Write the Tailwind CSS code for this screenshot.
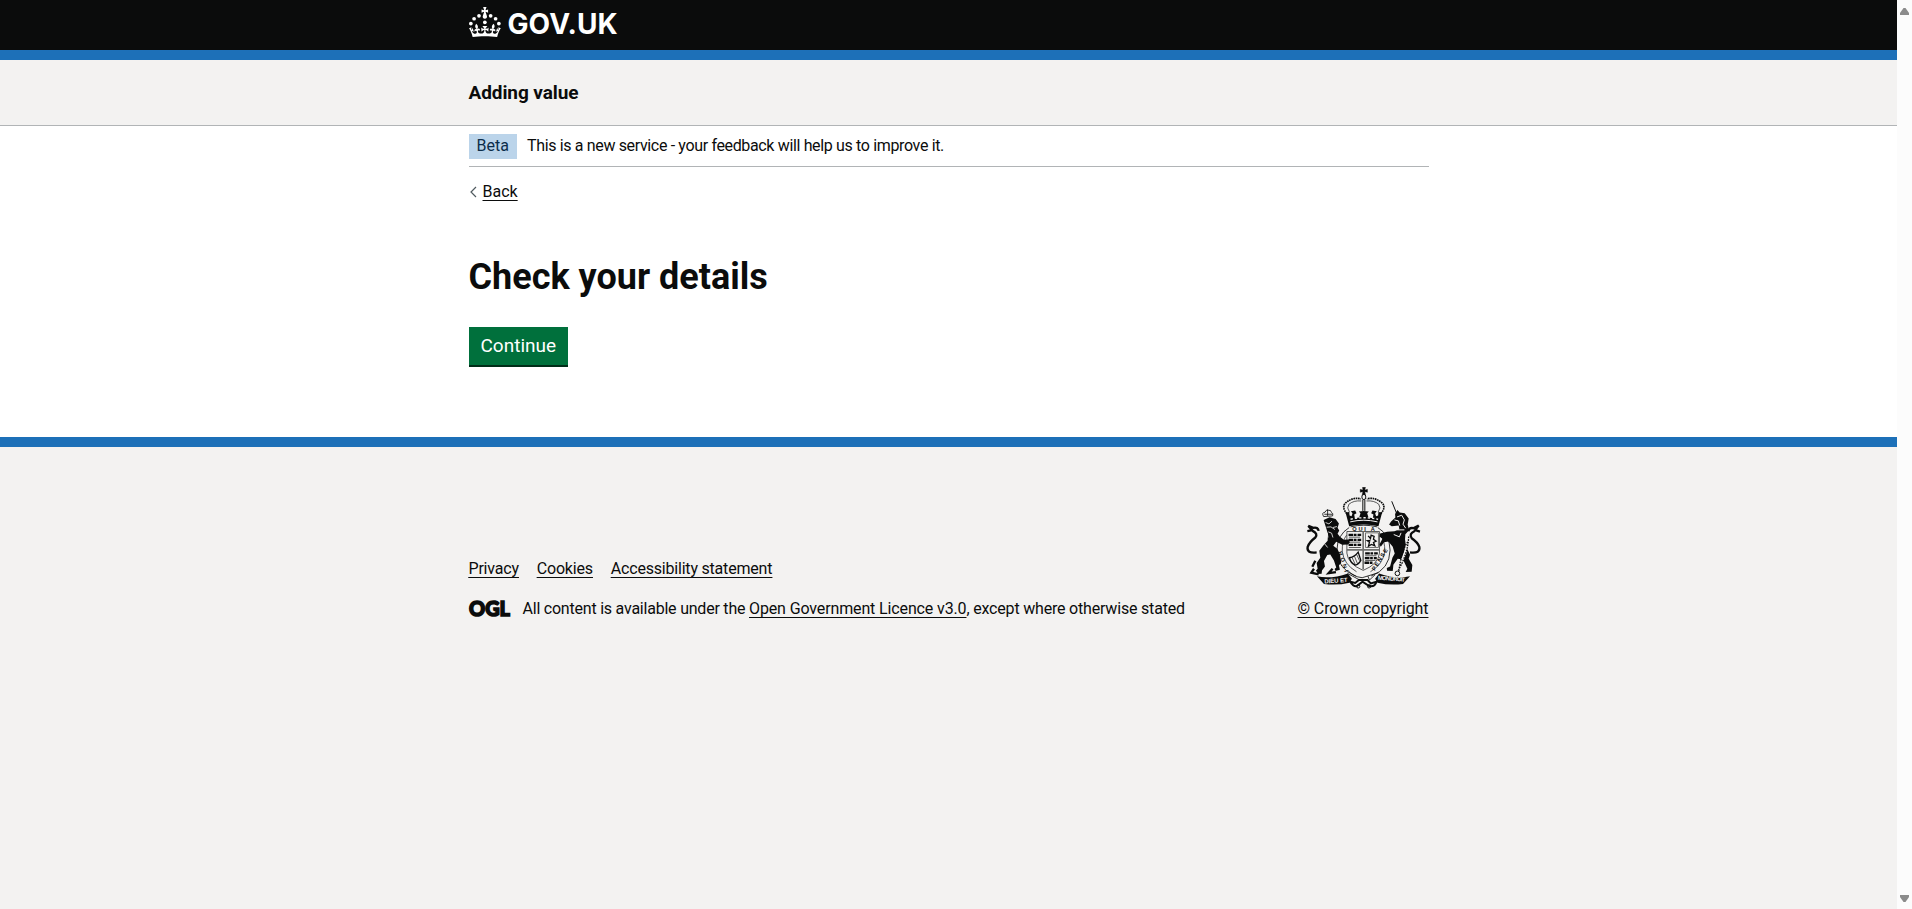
<!DOCTYPE html>
<html lang="en">
<head>
<meta charset="utf-8">
<title>Check your details - Adding value - GOV.UK</title>
<script src="https://cdn.jsdelivr.net/npm/@tailwindcss/browser@4"></script>
</head>
<body class="flex h-screen overflow-hidden bg-white font-['Roboto',sans-serif] text-[16px] leading-[20px] text-[#0b0c0c]">
<div class="flex min-w-0 flex-1 flex-col">
  <header>
    <div class="h-[60px] border-b-[10px] border-[#1d70b8] bg-[#0b0c0c]">
      <div class="mx-auto flex w-[960px] pt-[7px] text-white">
        <svg class="h-[30px] w-[32px] shrink-0" viewBox="0 0 64 60" fill="currentColor" aria-hidden="true">
          <circle cx="20" cy="17.6" r="3.7"/><circle cx="10.2" cy="23.5" r="3.7"/><circle cx="3.7" cy="33.2" r="3.7"/><circle cx="31.7" cy="30.6" r="3.7"/><circle cx="43.3" cy="17.6" r="3.7"/><circle cx="53.2" cy="23.5" r="3.7"/><circle cx="59.7" cy="33.2" r="3.7"/>
          <path d="M33.1,9.8c.2-.1.3-.3.5-.5l4.6,2.4v-6.8l-4.6,1.5c-.1-.2-.3-.3-.5-.5l1.9-5.9h-6.7l1.9,5.9c-.2.1-.3.3-.5.5l-4.6-1.5v6.8l4.6-2.4c.1.2.3.3.5.5l-2.6,8c-.9,2.8,1.2,5.7,4.1,5.7h0c3,0,5.1-2.9,4.1-5.7l-2.6-8ZM37,37.9s-3.4,3.8-4.1,6.1c2.2,0,4.2-.5,6.4-2.8l-.7,8.5c-2-2.8-4.4-4.1-5.7-3.8.1,3.1.5,6.7,5.8,7.2,3.7.3,6.7-1.5,7-3.8.4-2.6-2-4.3-3.7-1.6-1.4-4.5,2.4-6.1,4.9-3.2-1.9-4.5-1.8-7.7,2.4-10.9,3,4,2.6,7.3-1.2,11.1,2.4-1.3,6.2,0,4,4.6-1.2-2.8-3.7-2.2-4.2.2-.3,1.7.7,3.7,3,4.2,1.9.3,4.7-.9,7-5.9-1.3,0-2.4.7-3.9,1.7l2.4-8c.6,2.3,1.4,3.7,2.2,4.5.6-1.6.5-2.8,0-5.3l5,1.8c-2.6,3.6-5.2,8.7-7.3,17.5-7.4-1.1-15.7-1.7-24.5-1.7h0c-8.8,0-17.1.6-24.5,1.7-2.1-8.9-4.7-13.9-7.3-17.5l5-1.8c-.5,2.5-.6,3.7,0,5.3.8-.8,1.6-2.3,2.2-4.5l2.4,8c-1.5-1-2.6-1.7-3.9-1.7,2.3,5,5.2,6.2,7,5.9,2.3-.4,3.3-2.4,3-4.2-.5-2.4-3-3.1-4.2-.2-2.2-4.6,1.6-6,4-4.6-3.7-3.7-4.2-7.1-1.2-11.1,4.2,3.2,4.3,6.4,2.4,10.9,2.5-2.8,6.3-1.3,4.9,3.2-1.8-2.7-4.1-1-3.7,1.6.3,2.3,3.3,4.1,7,3.8,5.4-.5,5.7-4.2,5.8-7.2-1.3-.2-3.7,1-5.7,3.8l-.7-8.5c2.2,2.3,4.2,2.7,6.4,2.8-.7-2.3-4.1-6.1-4.1-6.1h10.6,0Z"/>
        </svg>
        <span class="ml-[7px] mt-[1px] font-['Inter',sans-serif] text-[28px] font-bold leading-[32px] tracking-[0.1px]">GOV.UK</span>
      </div>
    </div>
    <div class="h-[66px] border-b border-[#b1b4b6] bg-[#f3f2f1]">
      <div class="mx-auto flex w-[960px] pt-5"><span class="text-[19px] font-bold leading-[25px] tracking-[-0.08px]">Adding value</span></div>
    </div>
  </header>
  <div class="mx-auto w-[960px]">
    <div class="flex h-[41px] border-b border-[#b1b4b6] pt-2">
      <strong class="mr-[10.5px] h-[25px] w-[48px] bg-[#bbd4ea] pl-2 pt-[2px] font-normal text-[#0c2d4a]">Beta</strong>
      <span class="pt-[2px] tracking-[-0.35px]">This is a new service - your feedback will help us to improve it.</span>
    </div>
    <a class="mt-[15px] flex w-fit items-center"><svg class="mr-[6px] h-[12px] w-[8px]" viewBox="0 0 8 12" fill="none" stroke="#505a5f" stroke-width="1.2" aria-hidden="true"><path d="M7 1 2 6l5 5"/></svg><span class="underline decoration-1 underline-offset-[3px]">Back</span></a>
    <main class="pt-[53px]">
      <h1 class="text-[36px] font-bold leading-[45px]">Check your details</h1>
      <button class="mt-[27px] block h-[38px] w-[99px] bg-[#00703c] pl-3 text-left text-[19px] leading-[38px] text-white shadow-[0_2px_0_#002d18]">Continue</button>
    </main>
  </div>
  <footer class="mt-[72px] flex-1 border-t-[10px] border-[#1d70b8] bg-[#f3f2f1]">
    <div class="mx-auto flex w-[960px] justify-between pt-10">
      <div class="pt-[72px]">
        <div class="flex gap-[18px] tracking-[-0.2px] underline decoration-1 underline-offset-[3px]"><a>Privacy</a><a>Cookies</a><a>Accessibility statement</a></div>
        <div class="mt-5 flex">
          <svg class="mr-[13px] h-[20px] w-[41px] overflow-visible" viewBox="0 0 41 20" role="img" aria-label="Open Government Licence"><text x="0" y="16.5" font-family="Lato" font-weight="900" font-size="21.5" textLength="41" lengthAdjust="spacingAndGlyphs" stroke="#0b0c0c" stroke-width="1.6" fill="#0b0c0c">OGL</text></svg>
          <span class="whitespace-pre tracking-[-0.22px]">All content is available under the </span><a class="tracking-[-0.13px] underline decoration-1 underline-offset-[3px]">Open Government Licence v3.0</a><span class="tracking-[-0.19px]">, except where otherwise stated</span>
        </div>
      </div>
      <div class="flex w-[131px] flex-col items-center">
        <svg class="h-[102px] w-[117px]" viewBox="78 50 350 307" fill="none" stroke="#0b0c0c" stroke-width="3" aria-hidden="true">
          <!-- crown -->
          <path fill="#0b0c0c" stroke-width="1" d="M250 51h9l-2 8 8-2v9l-8-2 2 9h-10l2-9-8 2v-9l8 2z"/>
          <ellipse cx="254" cy="80" rx="6" ry="8"/>
          <path stroke-width="3" d="M251 88v34m6-34v34"/>
          <path stroke-width="5" stroke-dasharray="5 2" d="M203 130q-16-18-5-31 22-20 47-13m60 44q16-18 5-31-22-20-47-13"/>
          <path stroke-width="2" d="M211 126q-10-14-2-24 14-12 37-10m51 34q10-14 2-24-14-12-37-10"/>
          <path fill="#0b0c0c" stroke="none" d="M199 127l11-2 1 11 6 2 3-9-5-6 13-2 4 8-7 4 2 11 13-2 4-13-5-5 15-2 15 2-5 5 4 13 13 2 2-11-7-4 4-8 13 2-5 6 3 9 6-2 1-11 11 2-11 41q-44-11-88 0z"/>
          <path stroke="#f3f2f1" stroke-width="3" d="M213 155q41-10 82 0"/><path stroke="#f3f2f1" stroke-width="4" stroke-dasharray="7 6" d="M214 147q41-9 83 0"/>
          <!-- garter and shield -->
          <path stroke-width="2.500" d="M210 172q-36 22-37 68 1 57 57 78m66-146q36 22 37 68-1 57-57 78M214 170q40-10 80 0"/>
          <path stroke-width="2" d="M202 195q-14 18-13 49 5 39 43 61m72-110q14 18 13 49-5 39-43 61"/>
          <g fill="#0b0c0c" stroke="none" font-family="Liberation Sans" font-weight="700" font-size="17"><text x="219" y="181" textLength="68">QUI A</text><text transform="translate(177 246) rotate(72)" textLength="64">HONI</text><text transform="translate(287 303) rotate(-58)" textLength="75">PENSE</text></g>
          <path fill="#f3f2f1" stroke-width="2" d="M203 184h98v65q-3 33-49 52-46-19-49-52z"/>
          <path stroke="#70716f" stroke-width="5" d="M252 184v114M203 239h98"/>
          <path stroke-width="7" stroke-dasharray="14 2 8 3 11 4" d="M208 194h40M208 209h40M208 224h40M258 250h38M257 264h36M256 278h27"/>
          <path stroke-width="2" d="M209 201h34M209 216h34M209 232h36M258 257h34M258 271h31"/><path stroke="#70716f" stroke-width="3" d="M259 188h39v44h-39z"/>
          <path stroke-width="4" d="M267 197l7 8 2-10 9 4-2 8 8 6-8 4 4 10-10-4-9 5 3-12-6-4 9-1"/>
          <path stroke-width="4" d="M211 263q16-3 26-17l8 25q-7 13-17 14-14-7-17-22z"/><path stroke-width="2" d="M219 263l9 20m-2-24l9 22m-2-27l8 18"/>
          <!-- lion -->
          <path fill="#0b0c0c" stroke="none" d="M133 149l18-8 18 5 10 14-4 13 5 8-5 10 7 9 12 9 14-1 4 8-5 7-18 1-18-9-9 12 12 9 8 16 4 25-7 9 3 13-13 4-3-6 5-5-7-21-11-18-9 2-10 18 3 16-9 12-1 10-11 1-6-11 5-5-3-17 11-16-3-21 12-16 13-14 1-20-4-14z"/>
          <path fill="#f3f2f1" stroke-width="2.500" d="M133 139q-7-12 4-13 4-9 10-6 8-2 10 7 6 2 3 10z"/><path stroke-width="2.500" d="M145 117v20M135 132h24"/>
          <path stroke="#f3f2f1" stroke-width="2.500" d="M139 157l10 4 9-8m-16 18l13-1 12 8m-20 7l10 4 4 13m-17-14l2 14m27-33l-12 3m-24 50l8 10"/>
          <path stroke-width="7" d="M112 247q-31 4-27-17 5-14 23-28 9-11-8-20l-13-15 15 6q14-3 16 9m-34 1l15-3"/>
          <path stroke-width="7" d="M104 296l-8 12 22 5m52-7l-22 3 12-13M108 272l-9 18"/>
          <!-- unicorn -->
          <path stroke-width="3" d="M338 93l15 37"/>
          <path fill="#0b0c0c" stroke="none" d="M348 131l7-12 7 8 15 2 12 16-3 18 4 17-11 12-1 16 3 20 12 26-4 12 11 19-2 20-18 1 5-10-13-28-16-2-13 18-2 19-17-1-1-8 10-5 7-26 7-13-6-20-13-16-13 2-10 14-4-7 9-17-9-7 2-9 21-5 22-2 15-5-2-12-21 2-8-5 6-9 13-12z"/>
          <path stroke="#f3f2f1" stroke-width="3" d="M354 140l14-5 8 14-4 13 8 12m-34-25l12 3 4 14m-7 13l21 0m-32 14l17 7 5-12"/>
          <path stroke="#f3f2f1" stroke-width="8" d="M387 198q-2 51-31 99"/><path stroke-width="4" stroke-dasharray="5 3" d="M389 199q-2 51-31 101m28-85q-18 24-27 91"/><circle cx="355" cy="310" r="7"/>
          <path stroke-width="7" d="M393 247q32 4 28-17-5-14-23-26-9-13 8-21l13-17-16 8q-12-3-15 9m35 1l-14-4"/>
          <!-- motto scroll -->
          <path fill="#0b0c0c" stroke="none" d="M113 319q43 9 93-9l12 16-7 12q-37 9-77 4zM393 319q-43 9-93-9l-12 16 7 12q37 9 77 4z"/>
          <g fill="#f3f2f1" stroke="none" font-family="Liberation Sans" font-weight="700" font-size="18"><text x="135" y="338" textLength="70" transform="rotate(-4 170 330)">DIEU ET</text><text x="296" y="332" textLength="82" transform="rotate(4 335 330)">MON DROIT</text></g>
          <path stroke-width="2.500" d="M206 301q15 19 43 22l49-15M205 310l42 23m19-15l5 12 17-16"/>
          <path fill="#f3f2f1" stroke-width="6" d="M213 335q10 16 20 13l17-13 20 13q17 4 22-13l-17 5-10-10h-26l-11 9z"/><circle cx="237" cy="349" r="5"/><circle cx="270" cy="349" r="5"/>
        </svg>
        <a class="mt-[10px] whitespace-nowrap tracking-[-0.09px] underline decoration-1 underline-offset-[3px]">© Crown copyright</a>
      </div>
    </div>
  </footer>
</div>
<div class="flex w-[15px] shrink-0 flex-col items-center justify-between bg-[#fcfcfc] pb-[7px] pt-[8px]">
  <svg class="h-[7px] w-[9px]" viewBox="0 0 9 7" fill="#8b8b8b"><path d="M3.5 0h2L9 5v2H0V5z"/></svg>
  <svg class="h-[7px] w-[9px]" viewBox="0 0 9 7" fill="#8b8b8b"><path d="M0 0h9v2L5.500 7h-2L0 2z"/></svg>
</div>
</body>
</html>
